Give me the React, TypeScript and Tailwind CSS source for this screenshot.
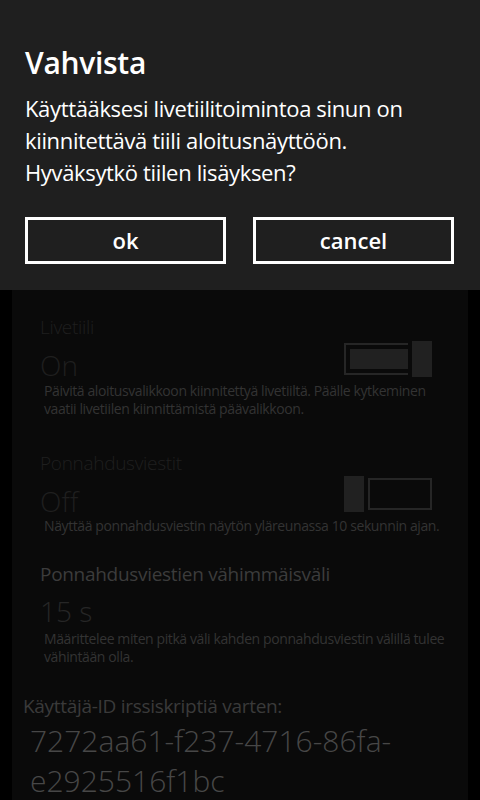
import React from "react";

function SwitchOn() {
  return (
    <div className="flex h-[36px] items-center gap-[4px]">
      <div className="flex h-[32px] w-[64px] items-stretch border-y-2 border-l-2 border-[#262626] py-[4px] pl-[4px]">
        <div className="flex-1 bg-[#212121]" />
      </div>
      <div className="h-[36px] w-[20px] bg-[#212121]" />
    </div>
  );
}

function SwitchOff() {
  return (
    <div className="flex h-[36px] items-center gap-[4px]">
      <div className="h-[36px] w-[20px] bg-[#212121]" />
      <div className="h-[32px] w-[64px] border-2 border-[#262626]" />
    </div>
  );
}

export default function App() {
  const font = { fontFamily: '"Open Sans", "Noto Sans", sans-serif' };
  return (
    <div className="relative h-[800px] w-[480px] overflow-hidden bg-black" style={font}>
      <div className="mx-[12px] h-[800px] bg-[#0a0a0a] pt-[315px]">
        {/* Section 1 */}
        <div className="pl-[28px] pr-[36px]">
          <div className="text-[19px] leading-[24px] tracking-[-0.3px] font-light text-[#1f1f1f]">Livetiili</div>
          <div className="mt-[2px] flex h-[36px] items-start justify-between">
            <div className="pt-[6px] text-[28px] leading-[36px] font-light text-[#1f1f1f]">On</div>
            <SwitchOn />
          </div>
        </div>
        <div className="mt-[5px] pl-[32px] pr-[10px] text-[14px] leading-[18px] tracking-[-0.4px] text-[#333333]">
          Päivitä aloitusvalikkoon kiinnitettyä livetiiltä. Päälle kytkeminen vaatii livetiilen kiinnittämistä päävalikkoon.
        </div>

        {/* Section 2 */}
        <div className="mt-[33px] pl-[28px] pr-[36px]">
          <div className="text-[19px] leading-[24px] tracking-[-0.3px] font-light text-[#1f1f1f]">Ponnahdusviestit</div>
          <div className="mt-[1px] flex h-[36px] items-start justify-between">
            <div className="pt-[7px] text-[28px] leading-[36px] font-light text-[#1f1f1f]">Off</div>
            <SwitchOff />
          </div>
        </div>
        <div className="mt-[5px] pl-[32px] pr-[10px] text-[14px] leading-[18px] tracking-[-0.4px] text-[#333333]">
          Näyttää ponnahdusviestin näytön yläreunassa 10 sekunnin ajan.
        </div>

        {/* Section 3 */}
        <div className="mt-[27px] pl-[28px] pr-[36px]">
          <div className="text-[19px] leading-[24px] tracking-[-0.3px] text-[#3c3c3c]">Ponnahdusviestien vähimmäisväli</div>
          <div className="mt-[7px] text-[28px] leading-[36px] font-light text-[#262626]">15 s</div>
        </div>
        <div className="mt-[1px] pl-[32px] pr-[10px] text-[14px] leading-[18px] tracking-[-0.4px] text-[#333333]">
          Määrittelee miten pitkä väli kahden ponnahdusviestin välillä tulee vähintään olla.
        </div>

        {/* User ID */}
        <div className="mt-[28px] pl-[11px] text-[19px] leading-[24px] tracking-[-0.3px] text-[#3a3a3a]">
          Käyttäjä-ID irssiskriptiä varten:
        </div>
        <div className="mt-[3px] pl-[18px] pr-[12px] text-[30px] leading-[40px] font-light text-[#474747]">
          7272aa61-f237-4716-86fa-e2925516f1bc
        </div>
      </div>

      {/* Dialog overlay */}
      <div className="absolute left-0 top-0 h-[290px] w-[480px] bg-[#1f1f1f] px-[25px] pt-[45px]">
        <div className="text-[30px] leading-[36px] tracking-[-0.3px] font-semibold text-white">Vahvista</div>
        <div className="mt-[11px] text-[22px] leading-[32px] tracking-[-0.35px] text-white">
          Käyttääksesi livetiilitoimintoa sinun on kiinnitettävä tiili aloitusnäyttöön. Hyväksytkö tiilen lisäyksen?
        </div>
        <div className="mt-[29px] flex gap-[27px] pr-[1px]">
          <button className="flex h-[47px] w-[201px] items-center justify-center border-[3px] border-white text-[22px] font-semibold text-white">
            ok
          </button>
          <button className="flex h-[47px] w-[201px] items-center justify-center border-[3px] border-white text-[22px] font-semibold text-white">
            cancel
          </button>
        </div>
      </div>
    </div>
  );
}
